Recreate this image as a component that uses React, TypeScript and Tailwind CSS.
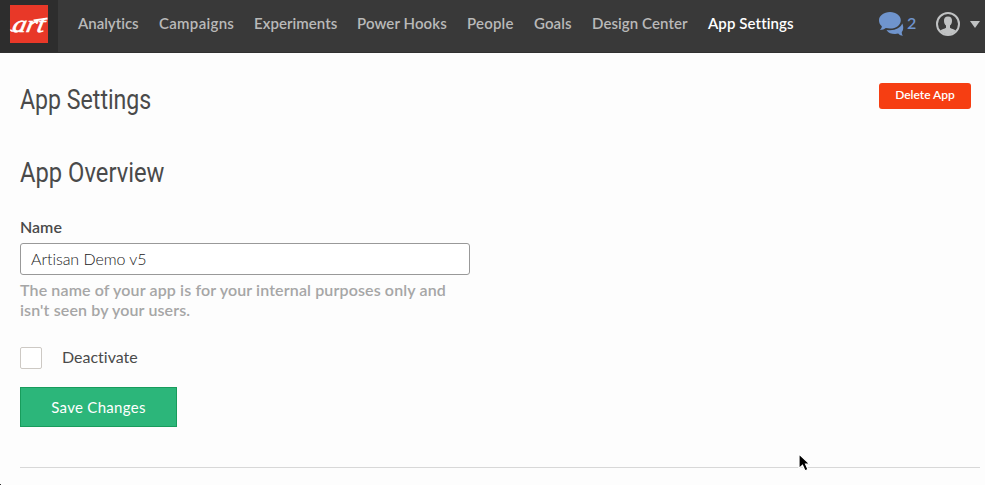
import React from "react";

const navItems = [
  { label: "Analytics", box: "w-[61px]", tone: "text-[#b9b9b9]" },
  { label: "Campaigns", box: "w-[75px] tracking-[0.3px]", tone: "text-[#b9b9b9]" },
  { label: "Experiments", box: "w-[83px] tracking-[0.05px]", tone: "text-[#b9b9b9]" },
  { label: "Power Hooks", box: "w-[90px] tracking-[0.1px]", tone: "text-[#b9b9b9]" },
  { label: "People", box: "w-[47px] tracking-[0.2px]", tone: "text-[#b9b9b9]" },
  { label: "Goals", box: "w-[38px] tracking-[0.1px]", tone: "text-[#b9b9b9]" },
  { label: "Design Center", box: "w-[96px] tracking-[0.08px]", tone: "text-[#b9b9b9]" },
  { label: "App Settings", box: "w-[86px] tracking-[0.1px]", tone: "text-white" },
];

function Logo() {
  return (
    <svg width="38" height="38" viewBox="0 0 38 38" className="block overflow-visible bg-[#e83828]">
      <text
        transform="translate(1.5 26.5) scale(1.15 1) skewX(-10)"
        fontFamily="Liberation Serif, serif"
        fontStyle="italic"
        fontWeight="400"
        fontSize="24"
        fill="#fff"
        stroke="#fff"
        strokeWidth="0.6"
      >
        art
      </text>
      <path d="M23.500 15.500Q31 14.500 37.500 13.500" fill="none" stroke="#fff" strokeWidth="1.800" />
      <path d="M0.500 24.500Q1 26.500 3 26" fill="none" stroke="#fff" strokeWidth="1.500" />
    </svg>
  );
}

function Header() {
  return (
    <header className="flex h-[53px] border-b border-[#303030] bg-[#393939]">
      <div className="h-[52px] w-[58px] shrink-0 bg-[#2d2d2d] pl-[10px] pt-[5px]">
        <Logo />
      </div>
      <nav className="ml-5 flex h-[46px] items-center gap-5 text-[15px] font-semibold">
        {navItems.map((n) => (
          <a key={n.label} className={`whitespace-nowrap ${n.box} ${n.tone}`}>
            {n.label}
          </a>
        ))}
      </nav>
      <div className="ml-auto flex h-12 items-center pr-[5px]">
        <svg width="25" height="25" viewBox="0 0 25 25" fill="#6f94cd">
          <path d="M11 0C4.800 0 0 3.700 0 8.200c0 2.700 1 4.500 2.800 6C2.800 15.800 2 17 .8 18c2.500 0 4.700-.6 6-1.900 1.300.3 2.700.5 4.200.5 6.200 0 10.800-3.700 10.800-8.400C21.800 3.700 17.200 0 11 0Z" />
          <path d="M23.200 11.500c-1.500 4-6 6.500-12.200 6.700-1.200 0-2.300 0-3.500-.2 1.800 3 5 4 8.500 4 1.300 0 2.300-.2 3.200-.5 1.300 1.500 2.800 2.200 4.800 2.200-1-1-1.300-2.200-1.200-3.700 1.700-1.500 2-6 .4-8.500Z" />
        </svg>
        <span className="mb-[2px] ml-[3px] w-[9px] text-[16px] font-semibold leading-none text-[#6f94cd]">2</span>
        <svg width="24" height="24" viewBox="0 0 24 24" className="ml-5">
          <circle cx="12" cy="12" r="11" fill="none" stroke="#c0c2c3" strokeWidth="2" />
          <path d="M12 4.500c-3 0-4.200 1.800-4 4.500.1 2.200.8 3.400 2 4.500v2.200c-1 1-4.500 1.500-5.800 2.800A10.300 10.300 0 0 0 12 22.300a10.300 10.300 0 0 0 7.800-3.800c-1.300-1.300-4.800-1.800-5.800-2.800v-2.200c1.200-1.100 1.900-2.300 2-4.500.2-2.700-1-4.500-4-4.500Z" fill="#c0c2c3" />
        </svg>
        <svg width="10" height="7" viewBox="0 0 10 7" className="ml-[10px]">
          <path d="M0 0h10L5 7Z" fill="#c0c2c3" />
        </svg>
      </div>
    </header>
  );
}

function Cursor() {
  return (
    <svg width="13" height="20" viewBox="0 0 13 20" className="absolute left-[798px] top-[453px]">
      <path d="M1 1v14.500l3.500-3.200 2.500 5.500 3-1.300-2.400-5.300H12Z" fill="#000" stroke="#fff" strokeWidth="1.200" />
    </svg>
  );
}

export default function App() {
  return (
    <div className="relative h-[485px] w-[985px] overflow-hidden bg-[#fdfdfd] font-['Lato','Liberation_Sans',sans-serif] text-[#4a4a4a] [font-variant-ligatures:none]">
      <Header />
      <main className="pl-5">
        <div className="flex justify-between pr-[14px] pt-[30px]">
          <h1 className="mt-px h-8 origin-left scale-x-[0.857] whitespace-nowrap font-['Roboto',sans-serif] text-[27px] leading-8">App Settings</h1>
          <button className="h-[26px] w-[92px] rounded-[3px] bg-[#f63e12] pb-[2px] text-[12px] font-semibold leading-[24px] text-white">Delete App</button>
        </div>
        <h2 className="mt-[41px] h-8 w-fit origin-left scale-x-[0.88] whitespace-nowrap font-['Roboto',sans-serif] text-[27px] leading-8">App Overview</h2>
        <label className="mt-[28px] block h-5 text-[16px] font-semibold leading-5">Name</label>
        <input
          defaultValue="Artisan Demo v5"
          className="mt-[6px] block h-8 w-[450px] rounded-[3px] border border-[#999] bg-white px-[10px] pb-[2px] text-[16px] font-light tracking-[-0.05px] text-[#222]"
        />
        <p className="mt-[5px] text-[16px] font-semibold leading-5 tracking-[0.13px] text-[#a6a6a6]">
          The name of your app is for your internal purposes only and
          <br />
          isn't seen by your users.
        </p>
        <div className="mt-[27px] flex h-[22px] items-center gap-5">
          <span className="size-[22px] rounded-[2px] border border-[#cdc9c4] bg-white" />
          <span className="pb-[2px] text-[16px] leading-5">Deactivate</span>
        </div>
        <button className="mt-[18px] block h-10 w-[157px] border border-[#189c5c] bg-[#2cb67a] text-[15px] tracking-[0.3px] text-white">Save Changes</button>
        <hr className="mr-[5px] mt-10 border-[#d8d8d8]" />
      </main>
      <Cursor />
      <span className="absolute bottom-0 left-0 size-px bg-[#333]" />
    </div>
  );
}
